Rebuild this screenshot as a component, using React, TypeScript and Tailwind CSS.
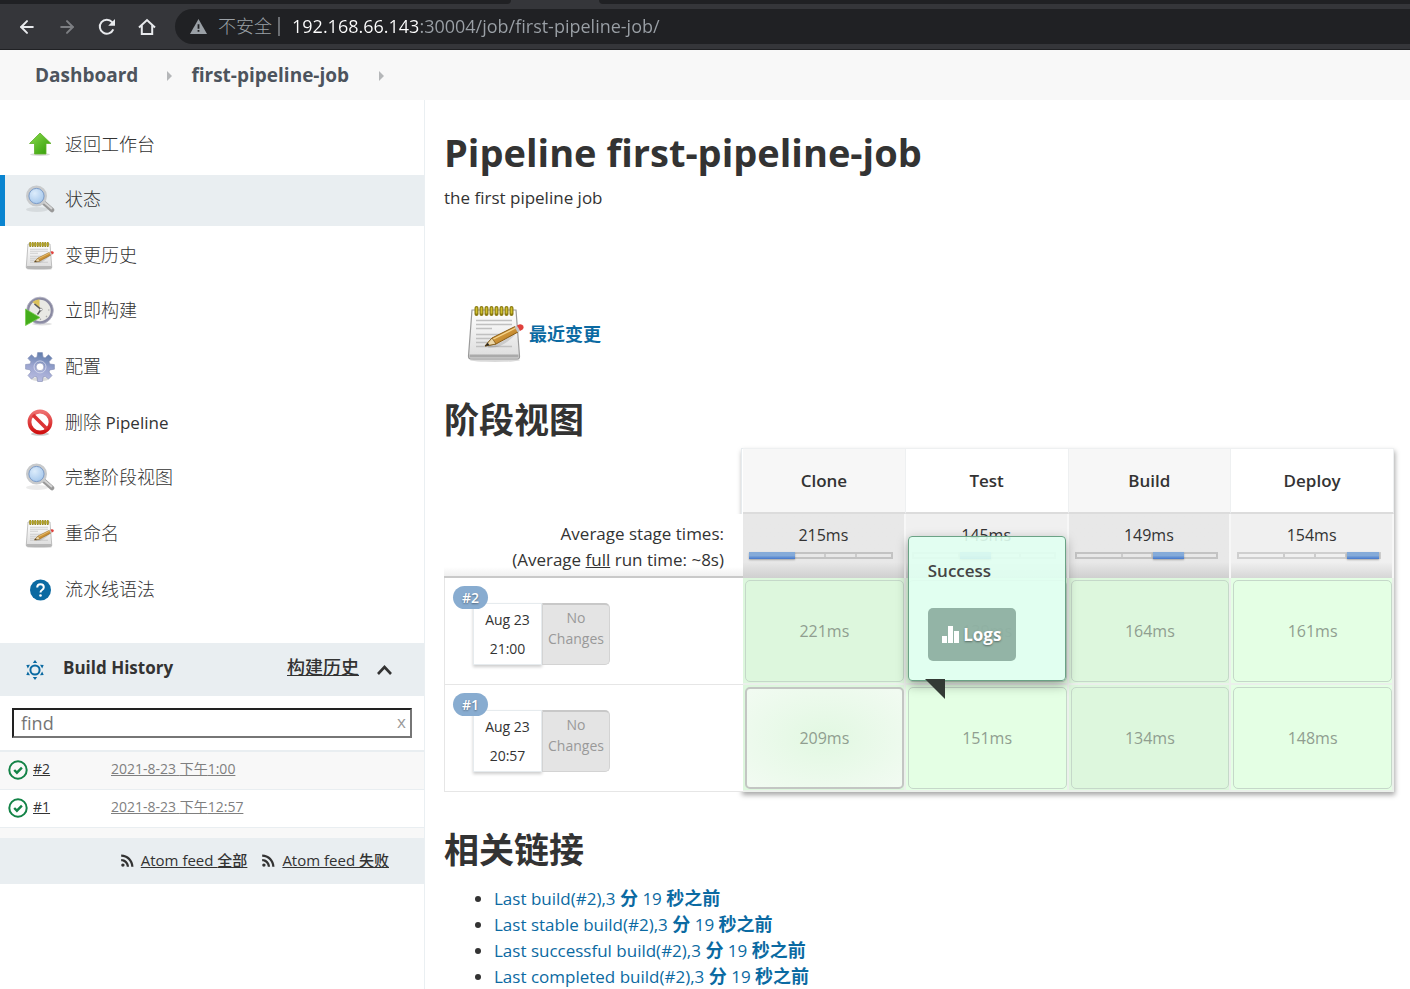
import React from "react";
import { ArrowLeft, ArrowRight } from "lucide-react";
import { MdRssFeed } from "react-icons/md";

const latin = "font-['Open_Sans','Noto_Sans_CJK_SC',sans-serif]";

function Zh({ children, className = "" }: { children: React.ReactNode; className?: string }) {
  return <span className={`text-[18px] leading-none ${className}`}>{children}</span>;
}

function ReloadIcon() {
  return (
    <svg width="20" height="20" viewBox="0 0 20 20" fill="none">
      <path d="M16.3 12.4a7 7 0 1 1-1.2-7.3L17 7" stroke="#e8eaed" strokeWidth="2" />
      <path d="M18 2v6.8h-6.8z" fill="#e8eaed" />
    </svg>
  );
}

function HomeIcon() {
  return (
    <svg width="18" height="18" viewBox="0 0 18 18" fill="none" stroke="#e8eaed" strokeWidth="2">
      <path d="M1 9.500 9 2l8 7.500M3.800 7.500V16h10.400V7.500" strokeLinejoin="miter" />
    </svg>
  );
}

function WarningIcon() {
  return (
    <svg width="17" height="15" viewBox="0 0 17 15" className="shrink-0">
      <path d="M8.500 0 17 15H0z" fill="#9aa0a6" />
      <path d="M7.600 5.300h1.800v4.400H7.600zM7.600 11h1.800v1.800H7.600z" fill="#202124" />
    </svg>
  );
}

function UpIcon() {
  return (
    <svg width="30" height="30" viewBox="0 0 30 30">
      <defs>
        <linearGradient id="up" x1="0" y1="0" x2="1" y2="1">
          <stop offset="0" stopColor="#8bdc4c" />
          <stop offset="1" stopColor="#2f9a06" />
        </linearGradient>
      </defs>
      <ellipse cx="15" cy="24.500" rx="10" ry="1.500" fill="#000" opacity=".15" />
      <path d="M15 3 26 13.500h-5V24h-11.500V13.500H4.500z" fill="url(#up)" stroke="#5fb02a" strokeWidth=".8" />
    </svg>
  );
}

function SearchIcon() {
  return (
    <svg width="30" height="30" viewBox="0 0 30 30">
      <defs>
        <radialGradient id="lens" cx=".4" cy=".35" r=".7">
          <stop offset="0" stopColor="#dcecfb" />
          <stop offset="1" stopColor="#9dc2ea" />
        </radialGradient>
      </defs>
      <ellipse cx="12" cy="24.500" rx="11" ry="2.500" fill="#000" opacity=".08" />
      <path d="m18.500 17.500 8.500 7.500" stroke="#999999" strokeWidth="4.500" strokeLinecap="round" />
      <path d="m19.500 17.500 7 6" stroke="#d4d4d4" strokeWidth="1.800" strokeLinecap="round" />
      <circle cx="11.500" cy="11" r="9" fill="url(#lens)" stroke="#c8cacc" strokeWidth="3" />
      <circle cx="11.500" cy="11" r="7.600" fill="none" stroke="#7c9cc9" strokeWidth="1" />
    </svg>
  );
}

function NotepadIcon({ size = 30 }: { size?: number }) {
  return (
    <svg width={size} height={size} viewBox="0 0 60 60">
      <defs>
        <linearGradient id="paper" x1="0" y1="0" x2="0" y2="1">
          <stop offset="0" stopColor="#ffffff" />
          <stop offset="1" stopColor="#dcdcdc" />
        </linearGradient>
        <linearGradient id="wood" x1="0" y1="0" x2="1" y2="1">
          <stop offset="0" stopColor="#edb95a" />
          <stop offset="1" stopColor="#ac6e17" />
        </linearGradient>
      </defs>
      <ellipse cx="29" cy="56" rx="25" ry="2" fill="#000" opacity=".15" />
      <path d="M6 6h44l3.500 46q.2 3-2 3h-47q-2 0-2-3z" fill="url(#paper)" stroke="#9a9a9a" strokeWidth="1.200" />
      <path d="M3.500 52h49" stroke="#aaaaaa" strokeWidth="3" />
      <path d="M10 16.500h36M10 20.500h36M10 24.500h16M10 30.500h30M10 34.500h22M10 38.500h14M10 42.500h36" stroke="#c0c0c0" strokeWidth="1.400" />
      <path d="M10.500 4v6M15.500 4v6M20.500 4v6M25.500 4v6M30.500 4v6M35.500 4v6M40.500 4v6M45.500 4v6" stroke="#8b7b13" strokeWidth="4" strokeLinecap="round" />
      <path d="M10.500 4v5M15.500 4v5M20.500 4v5M25.500 4v5M30.500 4v5M35.500 4v5M40.500 4v5M45.500 4v5" stroke="#d1c02b" strokeWidth="1.600" strokeLinecap="round" />
      <path d="M22 42q12 2 26-12" fill="none" stroke="#000" strokeWidth="3" opacity=".12" />
      <path d="m19 42 7-8 23-11.500 3 5.500-22 12z" fill="url(#wood)" stroke="#8a5c14" strokeWidth="1" />
      <path d="m26.500 35.500 23-11.500" stroke="#f6d68e" strokeWidth="1.200" />
      <path d="m19 42 7-8 4 6z" fill="#ecd7a8" stroke="#78500f" strokeWidth=".7" />
      <path d="m19 42 2.800-3.200 1.600 2.400z" fill="#222" />
      <path d="m48.500 22.700 2.500-1.300 3 5.500-2.500 1.400z" fill="#c6c6c6" />
      <path d="m51 21.400 2-1q3-.6 4.300 1.400 1 2.200-.8 3.700l-2.500 1.400z" fill="#e0413c" />
    </svg>
  );
}

function ClockIcon() {
  return (
    <svg width="30" height="30" viewBox="0 0 30 30">
      <ellipse cx="17" cy="28" rx="10" ry="1.500" fill="#000" opacity=".12" />
      <circle cx="15" cy="14.500" r="12" fill="#e9e9e4" stroke="#8a8aa2" strokeWidth="2.600" />
      <circle cx="15" cy="14.500" r="13.400" fill="none" stroke="#b0b0c0" strokeWidth=".8" />
      <path d="M14.500 12.500 7.500 6q3-2.800 7-2.500z" fill="#dcc25a" />
      <path d="m9.500 8 6.500 5.500-3.500 5" fill="none" stroke="#5a5a5a" strokeWidth="1.600" />
      <circle cx="16" cy="13.500" r="1.300" fill="#fff" stroke="#777" strokeWidth=".6" />
      <path d="M23 14h1.500M15.500 22.500V24M21 20l1 1" stroke="#aaa" strokeWidth="1.200" />
      <path d="M.5 13 15 21.500.5 29.500z" fill="#44ad1b" stroke="#79cc50" strokeWidth=".8" />
    </svg>
  );
}

function GearIcon() {
  return (
    <svg width="30" height="30" viewBox="0 0 30 30">
      <defs>
        <linearGradient id="gear" gradientUnits="userSpaceOnUse" x1="18" y1="2" x2="12" y2="28">
          <stop offset="0" stopColor="#6480ae" />
          <stop offset=".5" stopColor="#9aa4cf" />
          <stop offset="1" stopColor="#b6badf" />
        </linearGradient>
      </defs>
      <ellipse cx="15" cy="27" rx="9" ry="2" fill="#000" opacity=".14" />
      <path
        fill="url(#gear)"
        stroke="#828cb4"
        strokeWidth=".6"
        fillRule="evenodd"
        d="M12.600.6h4.800L18 5l2.100.9 3.400-3.200 3.600 3.600-3.100 3.500.9 2.200 4.500.6v4.600l-4.500.7-.9 2.100 3 3.600-3.400 3.400-3.500-2.700-2.100.9-.6 4.300h-4.800l-.6-4.300-2.100-.9-3.600 2.700L3 23.500l3-3.600-.9-2.100-4.500-.7v-4.600l4.500-.5.9-2.200-3.100-3.500L6.500 2.700 9.900 5.900 12 5zM15 11a3.900 3.900 0 1 0 0 7.800 3.900 3.900 0 0 0 0-7.800z"
      />
      <circle cx="15" cy="14.900" r="6" fill="none" stroke="#dfe3f2" strokeWidth="1" opacity=".7" />
    </svg>
  );
}

function DeleteIcon() {
  return (
    <svg width="30" height="30" viewBox="0 0 30 30">
      <defs>
        <linearGradient id="ban" x1="0" y1="0" x2="0" y2="1">
          <stop offset="0" stopColor="#ee7070" />
          <stop offset="1" stopColor="#d01010" />
        </linearGradient>
      </defs>
      <ellipse cx="15" cy="26" rx="9" ry="1.800" fill="#000" opacity=".2" />
      <circle cx="15" cy="14" r="10.500" fill="#fff" stroke="url(#ban)" strokeWidth="3.800" />
      <path d="m8 7 14 14" stroke="#dc3436" strokeWidth="3.600" />
    </svg>
  );
}

function HelpIcon() {
  return (
    <svg width="30" height="30" viewBox="0 0 30 30">
      <circle cx="15.500" cy="15" r="10.500" fill="#0b6aa2" />
      <path d="M12.200 12.500q0-3.300 3.300-3.300t3.300 3q0 1.600-1.800 2.800-1.500 1-1.500 2.600" fill="none" stroke="#fff" strokeWidth="2" />
      <circle cx="15.500" cy="20.500" r="1.300" fill="#fff" />
    </svg>
  );
}

function SunIcon() {
  return (
    <svg width="20" height="20" viewBox="0 0 20 20">
      <circle cx="10" cy="10" r="4.600" fill="none" stroke="#0b6aa2" strokeWidth="2" />
      <path
        d="M10 0l2.200 3H7.800zM10 20l2.200-3H7.800zM1.300 5l3.700-.3-2.200 3.700zM18.700 5 15 4.700l2.200 3.700zM1.300 15l3.700.3-2.200-3.700zM18.700 15l-3.700.3 2.200-3.700z"
        fill="#0b6aa2"
      />
    </svg>
  );
}

function OkIcon() {
  return (
    <svg width="20" height="20" viewBox="0 0 20 20" fill="none" stroke="#138347">
      <circle cx="10" cy="10" r="8.700" strokeWidth="2" />
      <path d="m6.200 10 2.700 2.700 5-5" strokeWidth="2.400" />
    </svg>
  );
}

function Caret() {
  return (
    <svg width="5" height="10" viewBox="0 0 5 10">
      <path d="M0 0 5 5 0 10z" fill="#b5b7b9" />
    </svg>
  );
}

const tasks = [
  { icon: <UpIcon />, label: "返回工作台" },
  { icon: <SearchIcon />, label: "状态", active: true },
  { icon: <NotepadIcon />, label: "变更历史" },
  { icon: <ClockIcon />, label: "立即构建" },
  { icon: <GearIcon />, label: "配置" },
  { icon: <DeleteIcon />, label: "删除", suffix: "Pipeline" },
  { icon: <SearchIcon />, label: "完整阶段视图" },
  { icon: <NotepadIcon />, label: "重命名" },
  { icon: <HelpIcon />, label: "流水线语法" },
];

const builds = [
  { id: "#2", day: "2021-8-23", half: "下午", time: "1:00", row: "bg-[#f8f8f8]" },
  { id: "#1", day: "2021-8-23", half: "下午", time: "12:57", row: "bg-white" },
];

const stages = [
  { name: "Clone", avg: "215ms" },
  { name: "Test", avg: "145ms" },
  { name: "Build", avg: "149ms" },
  { name: "Deploy", avg: "154ms" },
];

const weights = [33, 22, 22, 23];

const runs = [
  { id: "#2", time: "21:00", cells: ["221ms", "139ms", "164ms", "161ms"] },
  { id: "#1", time: "20:57", cells: ["209ms", "151ms", "134ms", "148ms"] },
];

const links = ["Last build(#2),3", "Last stable build(#2),3", "Last successful build(#2),3", "Last completed build(#2),3"];

function BrowserBar() {
  return (
    <header className="border-b border-b-[#202124] bg-[#35363a]">
      <div className="flex h-[4px] gap-[88px]">
        <div className="w-[511px] rounded-br-[8px] bg-[#202124]" />
        <div className="flex-1 rounded-bl-[8px] bg-[#202124]" />
      </div>
      <div className="flex h-[45px] items-center pl-[17px]">
        <button aria-label="Back" className="mr-[20px] text-[#e8eaed]">
          <ArrowLeft size={20} strokeWidth={2.4} />
        </button>
        <button aria-label="Forward" className="mr-[20px] text-[#7d7f83]">
          <ArrowRight size={20} strokeWidth={2.4} />
        </button>
        <button aria-label="Reload" className="mr-[21px]">
          <ReloadIcon />
        </button>
        <button aria-label="Home" className="mr-[19px]">
          <HomeIcon />
        </button>
        <div className="flex h-[35px] flex-1 items-center rounded-l-full bg-[#202124] pl-[15px]">
          <WarningIcon />
          <span className="ml-[11px] text-[18px] font-light whitespace-nowrap text-[#9aa0a6]">不安全</span>
          <span className="mx-[6px] h-[19px] w-[2px] bg-[#6b6e72]" />
          <input
            aria-label="Address"
            className="ml-[6px] min-w-0 flex-1 bg-linear-to-r from-white from-[127px] to-[#9aa0a6] to-[127px] bg-clip-text text-[18px] text-transparent outline-none"
            defaultValue="192.168.66.143:30004/job/first-pipeline-job/"
          />
        </div>
      </div>
    </header>
  );
}

function Sidebar() {
  return (
    <aside className="w-[425px] shrink-0 border-r border-[#eaeff2]">
      <nav className="flex h-[515px] flex-col justify-between pt-[19px]">
        {tasks.map((t) => (
          <a
            key={t.label}
            href="#"
            className={`flex h-[51px] items-center gap-[10px] border-l-[5px] pl-[20px] ${
              t.active ? "border-[#0a84d0] bg-[#e9eef1]" : "border-transparent"
            }`}
          >
            {t.icon}
            <span>
              <Zh className="font-light">{t.label}</Zh>
              {t.suffix && <span className="text-[17px] font-medium"> {t.suffix}</span>}
            </span>
          </a>
        ))}
      </nav>
      <div className="mt-[28px] flex h-[53px] items-center bg-[#e9eef1] pr-[32px] pl-[25px]">
        <SunIcon />
        <h2 className="ml-[18px] flex-1 pb-[4px] text-[17px] font-bold">Build History</h2>
        <a href="#" className="pb-[4px] text-[18px] font-medium underline">构建历史</a>
        <svg className="ml-[18px]" width="15" height="10" viewBox="0 0 15 10" fill="none">
          <path d="m1 9 6.500-7L14 9" stroke="#333" strokeWidth="2.600" />
        </svg>
      </div>
      <div className="relative px-[12px] py-[12px]">
        <input
          aria-label="Find build"
          placeholder="find"
          className="block h-[30px] w-full border-2 border-[#767676] border-t-[#222] border-l-[#222] px-[7px] text-[18px] placeholder:text-[#757575]"
        />
        <button aria-label="Clear" className="absolute top-[14px] right-[18px] text-[17px] leading-[24px] text-[#999]">x</button>
      </div>
      <table className="w-full table-fixed border-t-2 border-[#e9eef1] text-[14px]">
        <tbody>
          {builds.map((b) => (
            <tr key={b.id} className={`h-[38px] border-b border-[#e9eef1] ${b.row}`}>
              <td className="w-[111px] pl-[8px]">
                <span className="flex items-center gap-[5px]">
                  <OkIcon />
                  <a href="#" className="pb-[3px] underline">{b.id}</a>
                </span>
              </td>
              <td className="pb-[3px]">
                <a href="#" className="text-[#7f7f7f] underline">
                  {b.day} {b.half}{b.time}
                </a>
              </td>
            </tr>
          ))}
        </tbody>
      </table>
      <div className="h-[10px] bg-[#f8f8f8]" />
      <div className="flex h-[46px] items-center justify-end gap-[12px] bg-[#e9eef1] pr-[35px] text-[15px] font-medium">
        {["全部", "失败"].map((f) => (
          <a key={f} href="#" className="flex items-center gap-[4px]">
            <MdRssFeed size={19} />
            <span className="underline">Atom feed {f}</span>
          </a>
        ))}
      </div>
    </aside>
  );
}

function Popup() {
  return (
    <div className="absolute -top-[42px] left-[2px] z-10 h-[145px] w-[158px] rounded-[4px] border border-[#6ba386] bg-[#e0fff1]/90 px-[19px] pt-[21px] text-left text-[#444] shadow-[0_4px_12px_rgba(0,0,0,0.35)]">
      <div className="text-[17px] leading-[26px] font-semibold">Success</div>
      <button className="mt-[24px] flex h-[53px] w-[88px] items-center justify-center gap-[3px] rounded-[5px] bg-[#5f8274]/60 text-[17px] font-bold text-white [text-shadow:0_1px_2px_rgba(0,0,0,0.4)]">
        <svg width="18" height="17" viewBox="0 0 18 17" fill="#fff">
          <path d="M0 10h5v7H0zM6 0h5v17H6zM12 5h5v12h-5z" />
        </svg>
        Logs
      </button>
      <svg className="absolute top-[142px] left-[16px]" width="20" height="20" viewBox="0 0 20 20">
        <path d="M0 0h20v20z" fill="#333a35" />
      </svg>
    </div>
  );
}

function StageBar({ index, dark }: { index: number; dark: boolean }) {
  return (
    <div className={`mr-[11px] ml-[6px] flex h-[7px] border-2 ${dark ? "border-[#c3c3c3]" : "border-[#cfcfcf]"}`}>
      {weights.map((w, i) => (
        <div
          key={i}
          style={{ width: `${w}%` }}
          className={
            i === index
              ? "-my-[2px] bg-linear-to-b from-[#85abd9] from-50% to-[#4578cc] shadow-[0_1px_2px_rgba(0,0,0,0.3)] first:-ml-[2px] last:-mr-[2px]"
              : "border-r-2 border-[#cccccc] last:border-r-0"
          }
        />
      ))}
    </div>
  );
}

function StageView() {
  return (
    <div className="relative">
      <div className="pointer-events-none absolute inset-y-0 right-0 left-[297px] border border-[#e6ebee] shadow-[1px_3px_5px_rgba(0,0,0,0.35)]" />
      <table className="relative w-full table-fixed border-separate border-spacing-0 text-center">
        <colgroup>
          <col className="w-[299px]" />
          <col /><col /><col /><col />
        </colgroup>
        <thead>
          <tr className="h-[66px]">
            <td />
            {stages.map((s, i) => (
              <th
                key={s.name}
                className={`border-t border-r border-b-2 border-[#eef0f1] border-b-[#dcdcdc] text-[17px] font-semibold ${i % 2 ? "bg-white" : "bg-[#f7f7f7]"}`}
              >
                {s.name}
              </th>
            ))}
          </tr>
        </thead>
        <tbody>
          <tr className="h-[64px]">
            <td className="border-b-2 border-[#c9c9c9] bg-linear-to-b from-white from-85% to-[#f0f0f0] pr-[19px] pb-[3px] text-right align-bottom text-[17px] leading-[26px]">
              Average stage times:<br />
              (Average <span className="underline">full</span> run time: ~8s)
            </td>
            {stages.map((s, i) => (
              <td
                key={s.name}
                className={`border-r-2 border-[#f7f7f7] bg-linear-to-b from-75% align-top ${
                  i % 2 ? "from-[#f0f0f0] to-[#d6d6d6]" : "from-[#e8e8e8] to-[#cfcfcf]"
                }`}
              >
                <div className="pt-[8px] pb-[4px] leading-[26px]">{s.avg}</div>
                <StageBar index={i} dark={i % 2 === 0} />
              </td>
            ))}
          </tr>
          {runs.map((r, ri) => (
            <tr key={r.id} className="h-[107px]">
              <td className="border-b border-l border-[#e6e6e6] bg-white align-top">
                <div className="relative mt-[25px] ml-[28px] flex h-[62px] w-[137px] text-[14px]">
                  <div className="w-[69px] border border-[#e6ebee] bg-white py-px leading-[29px] shadow-[0_2px_3px_rgba(0,0,0,0.2)]">
                    Aug 23<br />{r.time}
                  </div>
                  <div className="w-[68px] rounded-r-[5px] border border-[#d3d3d3] border-t-2 border-t-[#c8c8c8] bg-[#e4e4e4] pt-[2px] leading-[21px] text-[#999]">
                    No<br />Changes
                  </div>
                  <span className="absolute -top-[17px] -left-[20px] rounded-full bg-[#88acd0] px-[9px] text-[14px] leading-[23px] font-semibold text-white [text-shadow:0_1px_2px_rgba(0,0,0,0.4)]">
                    {r.id}
                  </span>
                </div>
              </td>
              {r.cells.map((c, i) => (
                <td
                  key={c}
                  className={`relative border-r-2 border-b-2 border-[#ebf0eb] pt-[2px] pr-0 pb-px pl-[2px] ${i % 2 ? "bg-[#e4ffe4]" : "bg-[#ddf7dd]"}`}
                >
                  <div
                    className={`flex h-[102px] items-center justify-center rounded-[5px] ${
                      ri === 1 && i === 0
                        ? "border-2 border-[#c3c6c3] bg-radial from-[#e2f8e2] to-[#f2fbf2]"
                        : "border border-[#c5d8c9]"
                    } text-[#909e90]`}
                  >
                    {c}
                  </div>
                  {ri === 0 && i === 1 && <Popup />}
                </td>
              ))}
            </tr>
          ))}
        </tbody>
      </table>
    </div>
  );
}

export default function App() {
  return (
    <div className={`min-h-screen bg-white text-[16px] text-[#333] ${latin}`}>
      <BrowserBar />
      <nav className="flex h-[50px] items-center bg-[#f8f8f8] pt-px pl-[35px] text-[19px] font-bold text-[#4d545d]">
        <a href="#">Dashboard</a>
        <span className="mr-[19px] ml-[29px]"><Caret /></span>
        <a href="#">first-pipeline-job</a>
        <span className="ml-[30px]"><Caret /></span>
      </nav>
      <div className="flex h-[calc(100vh-100px)] overflow-hidden">
        <Sidebar />
        <main className="min-w-0 flex-1 pr-[16px] pl-[19px]">
          <h1 className="mt-[27px] text-[38px] leading-[50px] font-bold">Pipeline first-pipeline-job</h1>
          <p className="mt-[8px] text-[17px] leading-[26px]">the first pipeline job</p>
          <a href="#" className="mt-[93px] ml-[22px] flex items-center gap-[3px] text-[18px] font-bold text-[#0b6aa2]">
            <NotepadIcon size={60} />
            最近变更
          </a>
          <h2 className="mt-[31px] mb-[3px] text-[35px] leading-[50px] font-bold">阶段视图</h2>
          <StageView />
          <h2 className="mt-[33px] text-[35px] leading-[50px] font-bold">相关链接</h2>
          <ul className="mt-[11px] list-disc pl-[50px] text-[17px] leading-[26px]">
            {links.map((l) => (
              <li key={l}>
                <a href="#" className="font-medium text-[#0b6aa2]">
                  {l} <Zh className="font-bold">分</Zh> 19 <Zh className="font-bold">秒之前</Zh>
                </a>
              </li>
            ))}
          </ul>
        </main>
      </div>
    </div>
  );
}
